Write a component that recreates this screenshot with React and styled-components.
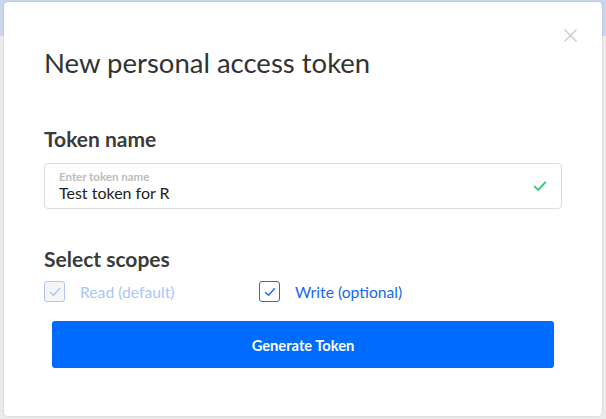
import styled, { createGlobalStyle } from "styled-components"

const GlobalStyle = createGlobalStyle`
    body {
        margin: 0;
        font-family: Lato, "Open Sans", Arial, sans-serif;
        background: #ebebeb;
    }
`

const Page = styled.div`
    width: 606px;
    height: 419px;
    display: grid;
    overflow: hidden;
`

const Backdrop = styled.div`
    grid-area: 1 / 1;
    display: flex;
    flex-direction: column;
    background: #ebebeb;
`

const TopBand = styled.div`
    height: 36px;
    background: #c9d6ee;
`

const Modal = styled.div`
    grid-area: 1 / 1;
    position: relative;
    margin: 2px 4px 3px 4px;
    background: #fff;
    border-radius: 4px;
    box-shadow: 0 0 2px rgba(0, 0, 0, 0.18);
    display: flex;
    flex-direction: column;
    padding: 44px 40px 0 40px;
`

const Close = styled.button`
    position: absolute;
    top: 26px;
    right: 24px;
    width: 15px;
    height: 15px;
    padding: 0;
    border: none;
    background: transparent;
    cursor: pointer;
`

const Title = styled.h1`
    margin: 0;
    font-size: 27.5px;
    line-height: 1.2;
    font-weight: 400;
    color: #333;
`

const Heading = styled.h2`
    margin: ${({ top }) => top}px 0 0 0;
    font-size: 21px;
    line-height: 1.2;
    font-weight: 700;
    color: #3b3b3b;
`

const Field = styled.label`
    margin-top: 12px;
    height: 46px;
    box-sizing: border-box;
    border: 1px solid #dcdcdc;
    border-radius: 4px;
    display: flex;
    align-items: center;
    padding: 0 14px;
`

const FieldText = styled.div`
    flex: 1;
    display: flex;
    flex-direction: column;
`

const FieldLabel = styled.span`
    font-size: 11.5px;
    font-weight: 700;
    color: #bdbdbd;
    line-height: 12px;
`

const FieldValue = styled.span`
    font-size: 16px;
    color: #222;
    line-height: 19px;
`

const Scopes = styled.div`
    margin-top: 10px;
    display: grid;
    grid-template-columns: 215px auto;
`

const Scope = styled.label`
    display: flex;
    align-items: center;
    gap: 15px;
    font-size: 15.7px;
    color: ${({ disabled }) => (disabled ? "#a9c6f6" : "#1769ef")};
`

const Box = styled.span`
    width: 21px;
    height: 21px;
    box-sizing: border-box;
    border-radius: 3px;
    border: 1px solid ${({ disabled }) => (disabled ? "#aac7f7" : "#1a6cf0")};
    background: ${({ disabled }) => (disabled ? "#f5f5f5" : "#fff")};
    display: flex;
    align-items: center;
    justify-content: center;
`

const Button = styled.button`
    margin: 19px 8px 0 8px;
    height: 47px;
    border: none;
    border-radius: 3px;
    background: #006bff;
    color: #fff;
    font-family: inherit;
    font-size: 14.7px;
    font-weight: 700;
    cursor: pointer;
`

const Check = ({ color, size = 12, width = 1.4 }) => (
    <svg width={size} height={size} viewBox="0 0 12 12" fill="none">
        <path d="M1.5 6.5 L4.5 9.3 L10.5 2.8" stroke={color} strokeWidth={width} strokeLinecap="round" strokeLinejoin="round" />
    </svg>
)

const App = () => {
    return (
        <>
            <GlobalStyle />
            <Page>
                <Backdrop>
                    <TopBand />
                </Backdrop>
                <Modal>
                    <Close aria-label="Close">
                        <svg width="15" height="15" viewBox="0 0 15 15">
                            <path d="M1.5 1.5 L13.5 13.5 M13.5 1.5 L1.5 13.5" stroke="#c9c9c9" strokeWidth="1.3" />
                        </svg>
                    </Close>
                    <Title>New personal access token</Title>
                    <Heading top={47}>Token name</Heading>
                    <Field>
                        <FieldText>
                            <FieldLabel>Enter token name</FieldLabel>
                            <FieldValue>Test token for R</FieldValue>
                        </FieldText>
                        <Check color="#2bc77b" size={14} width={1.6} />
                    </Field>
                    <Heading top={37}>Select scopes</Heading>
                    <Scopes>
                        <Scope disabled>
                            <Box disabled>
                                <Check color="#aac7f7" />
                            </Box>
                            Read (default)
                        </Scope>
                        <Scope>
                            <Box>
                                <Check color="#1a6cf0" />
                            </Box>
                            Write (optional)
                        </Scope>
                    </Scopes>
                    <Button>Generate Token</Button>
                </Modal>
            </Page>
        </>
    )
}

export default App
